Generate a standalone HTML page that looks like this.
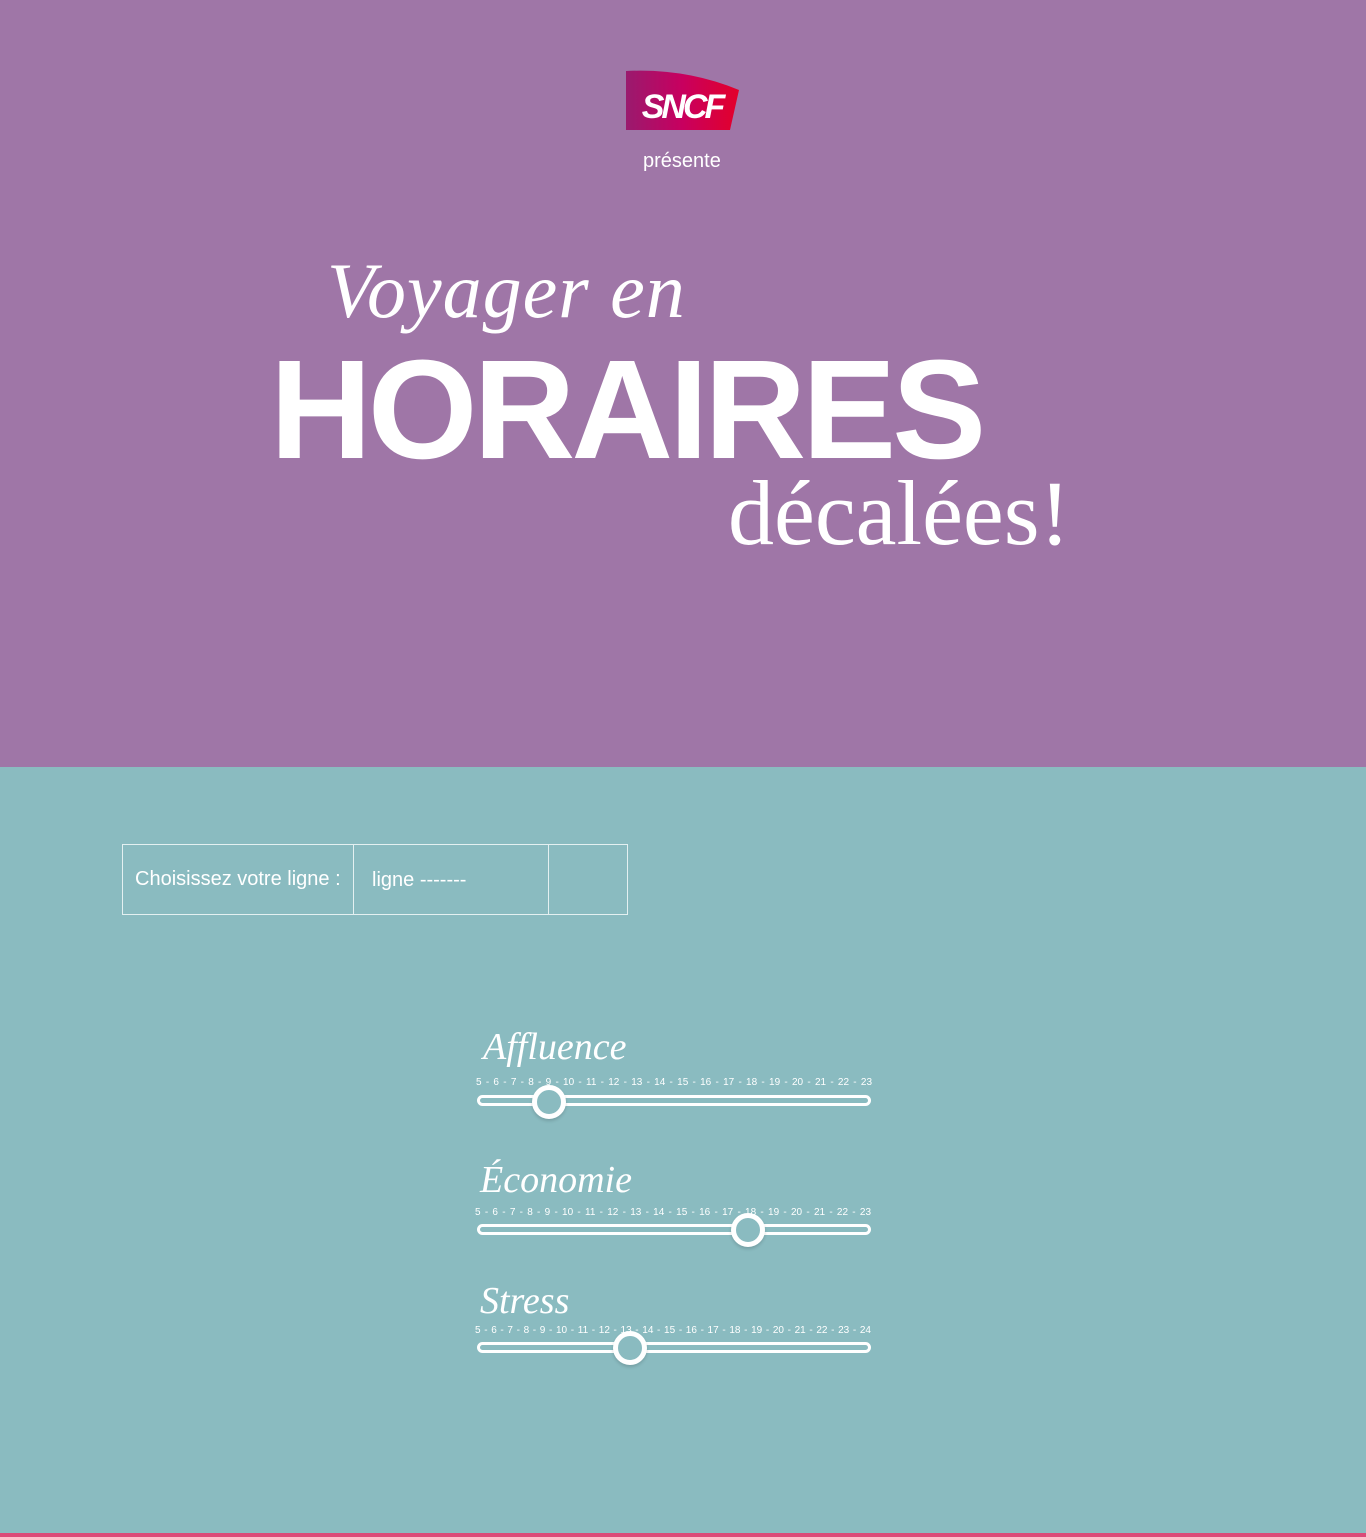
<!DOCTYPE html>
<html><head><meta charset="utf-8">
<style>
*{margin:0;padding:0;box-sizing:border-box}
html,body{width:1366px;height:1537px;overflow:hidden;font-family:"Liberation Sans",sans-serif}
.top{position:absolute;left:0;top:0;width:1366px;height:767px;background:#9f76a7}
.bot{position:absolute;left:0;top:767px;width:1366px;height:766px;background:#8abbc0}
.pink{position:absolute;left:0;top:1533px;width:1366px;height:4px;background:#dc4a78}
.t{position:absolute;color:#fff;white-space:nowrap}
.box{position:absolute;border:1px solid #e4f0f1;top:844px;height:71px}
.lbl{position:absolute;color:#fff;font-size:10px;width:396px;text-align:justify;text-align-last:justify;white-space:normal;height:14px;overflow:hidden}
.track{position:absolute;left:477px;width:394px;height:11px;border:3px solid #fff;border-radius:6px}
.knob{position:absolute;width:34px;height:34px;border:5px solid #fff;border-radius:50%;background:#8abbc0;box-shadow:0 2px 3px rgba(0,0,0,.15)}
.sl{position:absolute;color:#fff;font-family:"Liberation Serif",serif;font-style:italic;font-size:38px;white-space:nowrap}
</style></head><body>
<div class="top"></div>
<div class="bot"></div>
<div class="pink"></div>
<svg style="position:absolute;left:626px;top:70px" width="114" height="61" viewBox="0 0 114 61">
<defs><linearGradient id="g" x1="0" x2="1"><stop offset="0" stop-color="#9a1a6e"/><stop offset=".5" stop-color="#c8005f"/><stop offset="1" stop-color="#e3002a"/></linearGradient></defs>
<path d="M0 1 Q60 -2 113 20 L104 60 L0 60 Z" fill="url(#g)"/>
<text x="56" y="48" text-anchor="middle" fill="#fff" font-family="Liberation Sans" font-weight="bold" font-style="italic" font-size="34" letter-spacing="-3">SNCF</text>
</svg>
<div class="t" style="left:643px;top:150px;font-size:20px">présente</div>
<div class="t" style="left:327px;top:246px;font-family:'Liberation Serif',serif;font-style:italic;font-size:78px;letter-spacing:1px">Voyager en</div>
<div class="t" style="left:270px;top:328px;font-weight:bold;font-size:141px;letter-spacing:-4px">HORAIRES</div>
<div class="t" style="left:728px;top:460px;font-family:'Liberation Serif',serif;font-size:92px">décalées!</div>

<div class="box" style="left:122px;width:232px"></div>
<div class="box" style="left:353px;width:196px"></div>
<div class="box" style="left:548px;width:80px"></div>
<div class="t" style="left:135px;top:868px;font-size:20px">Choisissez votre ligne :</div>
<div class="t" style="left:372px;top:869px;font-size:20px">ligne -------</div>

<div class="sl" style="left:483px;top:1025px">Affluence</div>
<div class="lbl" style="left:476px;top:1077px">5 - 6 - 7 - 8 - 9 - 10 - 11 - 12 - 13 - 14 - 15 - 16 - 17 - 18 - 19 - 20 - 21 - 22 - 23</div>
<div class="track" style="top:1095px"></div>
<div class="knob" style="left:532px;top:1085px"></div>

<div class="sl" style="left:480px;top:1158px">Économie</div>
<div class="lbl" style="left:475px;top:1207px">5 - 6 - 7 - 8 - 9 - 10 - 11 - 12 - 13 - 14 - 15 - 16 - 17 - 18 - 19 - 20 - 21 - 22 - 23</div>
<div class="track" style="top:1224px"></div>
<div class="knob" style="left:731px;top:1213px"></div>

<div class="sl" style="left:480px;top:1279px">Stress</div>
<div class="lbl" style="left:475px;top:1325px">5 - 6 - 7 - 8 - 9 - 10 - 11 - 12 - 13 - 14 - 15 - 16 - 17 - 18 - 19 - 20 - 21 - 22 - 23 - 24</div>
<div class="track" style="top:1342px"></div>
<div class="knob" style="left:613px;top:1331px"></div>
</body></html>
